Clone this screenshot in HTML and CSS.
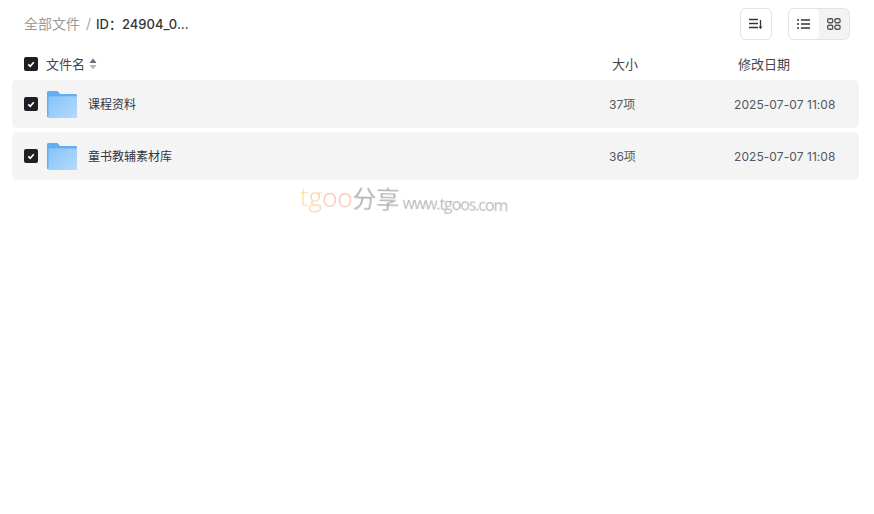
FILE: index.html
```html
<!DOCTYPE html>
<html lang="zh">
<head>
<meta charset="utf-8">
<title>文件列表</title>
<link rel="stylesheet" href="styles.css">
</head>
<body>
<svg class="defs" width="0" height="0" aria-hidden="true">
  <defs>
    <linearGradient id="fg" x1="0" y1="0" x2="1" y2="1">
      <stop offset="0" stop-color="#86c3f9"/>
      <stop offset="1" stop-color="#b5dafd"/>
    </linearGradient>
    <symbol id="folder" viewBox="0 0 30 28">
      <path d="M0 1.500A1.500 1.500 0 0 1 1.500 0H10.500L13 3H28.500A1.500 1.500 0 0 1 30 4.500V27H0Z" fill="#62aef2"/>
      <path d="M1.500 5.500H30V28H1.500Z" fill="url(#fg)"/>
      <rect x="22" y="7.500" width="5.500" height="2" fill="#a4cff7"/>
    </symbol>
    <symbol id="tick" viewBox="0 0 14 14">
      <path d="M4.300 7.300 6.200 9.200 9.800 5.200" fill="none" stroke="#fff" stroke-width="1.700"/>
    </symbol>
  </defs>
</svg>
<main class="page">
  <header class="top">
    <nav class="crumbs">
      <span class="crumb-root">全部文件</span>
      <span class="crumb-sep">/</span>
      <span class="crumb-cur">ID：24904_0...</span>
    </nav>
    <div class="tools">
      <button class="btn sort-btn" aria-label="排序">
        <svg width="14" height="12" viewBox="0 0 14 12"><path d="M0 1.500H9M0 5.500H9M0 9.500H9" stroke="#33353b" stroke-width="1.300" fill="none"/><path d="M11.500 2V10" stroke="#33353b" stroke-width="1.300"/><path d="M9.700 8.500H13.300L11.500 11.300Z" fill="#33353b"/></svg>
      </button>
      <div class="switch">
        <span class="sw sw-on">
          <svg width="14" height="10" viewBox="0 0 14 10"><path d="M0 1H2M4 1H13M0 5H2M4 5H13M0 9H2M4 9H13" stroke="#33353b" stroke-width="1.300" fill="none"/></svg>
        </span>
        <span class="sw">
          <svg width="14" height="12" viewBox="0 0 14 12"><g fill="none" stroke="#55575c" stroke-width="1.400"><rect x=".7" y=".7" width="5" height="4" rx="1.200"/><rect x="8" y=".7" width="5" height="4" rx="1.200"/><rect x=".7" y="7.200" width="5" height="4" rx="1.200"/><rect x="8" y="7.200" width="5" height="4" rx="1.200"/></g></svg>
        </span>
      </div>
    </div>
  </header>

  <div class="head-row">
    <span class="check head-check"><svg width="14" height="14"><use href="#tick"/></svg></span>
    <span class="head-name">文件名
      <svg class="sorter" width="8" height="12" viewBox="0 0 8 12"><path d="M4 .5 7.500 5H.5Z" fill="#6b6d72"/><path d="M.5 7H7.500L4 11.500Z" fill="#b5b6b9"/></svg>
    </span>
    <span class="head-size">大小</span>
    <span class="head-date">修改日期</span>
  </div>

  <div class="rows">
    <div class="row">
      <span class="check"><svg width="14" height="14"><use href="#tick"/></svg></span>
      <svg class="folder" width="30" height="27" preserveAspectRatio="none" viewBox="0 0 30 28"><use href="#folder" width="30" height="28"/></svg>
      <span class="name">课程资料</span>
      <span class="size">37项</span>
      <span class="date">2025-07-07 11:08</span>
    </div>
    <div class="row">
      <span class="check"><svg width="14" height="14"><use href="#tick"/></svg></span>
      <svg class="folder" width="30" height="27" preserveAspectRatio="none" viewBox="0 0 30 28"><use href="#folder" width="30" height="28"/></svg>
      <span class="name">童书教辅素材库</span>
      <span class="size">36项</span>
      <span class="date">2025-07-07 11:08</span>
    </div>
  </div>

  <div class="mark">
    <div class="mark-inner"><span class="m1">t</span><span class="m2">g</span><span class="m3">oo</span><span class="m4">分享</span><span class="m5">www.tgoos.com</span></div>
  </div>
</main>
</body>
</html>
```

FILE: styles.css
```css
* { box-sizing: border-box; }
html, body { margin: 0; padding: 0; background: #fff; }
body {
  width: 874px;
  height: 514px;
  overflow: hidden;
  font-family: "Inter", "Noto Sans CJK SC", sans-serif;
  color: #33353b;
}
.defs { position: absolute; }
.page { padding: 8px 15px 0 12px; }

.top {
  display: flex;
  align-items: center;
  justify-content: space-between;
  height: 32px;
  padding-left: 12px;
}
.crumbs { display: flex; align-items: center; font-size: 14px; line-height: 30px; height: 32px; }
.crumb-root { color: #9a9a9a; }
.crumb-sep { color: #a8a8a8; margin: 0 5px 0 6px; font-size: 14px; }
.crumb-cur { color: #33353b; font-weight: 500; font-size: 13px; }

.tools { display: flex; gap: 16px; padding-right: 9px; }
.btn {
  width: 32px;
  height: 32px;
  padding: 0;
  background: #fff;
  border: 1px solid #e4e4e4;
  border-radius: 6px;
  display: flex;
  align-items: center;
  justify-content: center;
}
.switch {
  display: flex;
  width: 62px;
  height: 32px;
  border: 1px solid #e4e4e4;
  border-radius: 6px;
  background: #f3f3f3;
  overflow: hidden;
}
.sw { flex: 1; display: flex; align-items: center; justify-content: center; }
.sw-on { background: #fff; border-radius: 5px; flex: 0 0 30px; }

.check {
  flex: none;
  width: 14px;
  height: 14px;
  border-radius: 2px;
  background: #1e1f24;
  display: block;
}
.check svg { display: block; }
.head-check { margin-top: 2px; }

.head-row {
  display: flex;
  align-items: center;
  height: 40px;
  padding: 6px 0 0 12px;
  font-size: 13px;
  color: #44464c;
}
.head-name { margin-left: 8px; display: flex; align-items: center; gap: 4px; width: 566px; }
.head-size { width: 126px; }
.sorter { margin-top: 1px; }

.rows { display: flex; flex-direction: column; gap: 4px; }
.row {
  display: flex;
  align-items: center;
  height: 48px;
  padding-left: 12px;
  background: #f4f4f4;
  border-radius: 5px;
  font-size: 12px;
  line-height: 16px;
  color: #55575c;
}
.folder { margin-left: 9px; flex: none; }
.name, .size, .date { padding-top: 2px; }
.name { margin-left: 11px; width: 521px; color: #33353b; }
.size { width: 125px; }
.date { letter-spacing: .07px; }

.mark { display: flex; padding: 0 0 0 288px; margin-top: -1px; }
.mark-inner { display: flex; align-items: baseline; height: 30px; transform: rotate(1.500deg); transform-origin: left; filter: blur(.35px); }
.m1, .m2, .m3 { font-size: 26px; font-family: "Open Sans", sans-serif; font-weight: 300; line-height: 26px; }
.m1 { color: #fddf9f; }
.m2 { color: #fdd19c; }
.m3 { color: #fbc2b2; }
.m4 { font-size: 23.500px; color: #b5b5b5; }
.m5 { font-size: 16px; color: #b8b8b8; margin-left: 3px; font-family: "Open Sans", sans-serif; letter-spacing: -1.100px; }
```
